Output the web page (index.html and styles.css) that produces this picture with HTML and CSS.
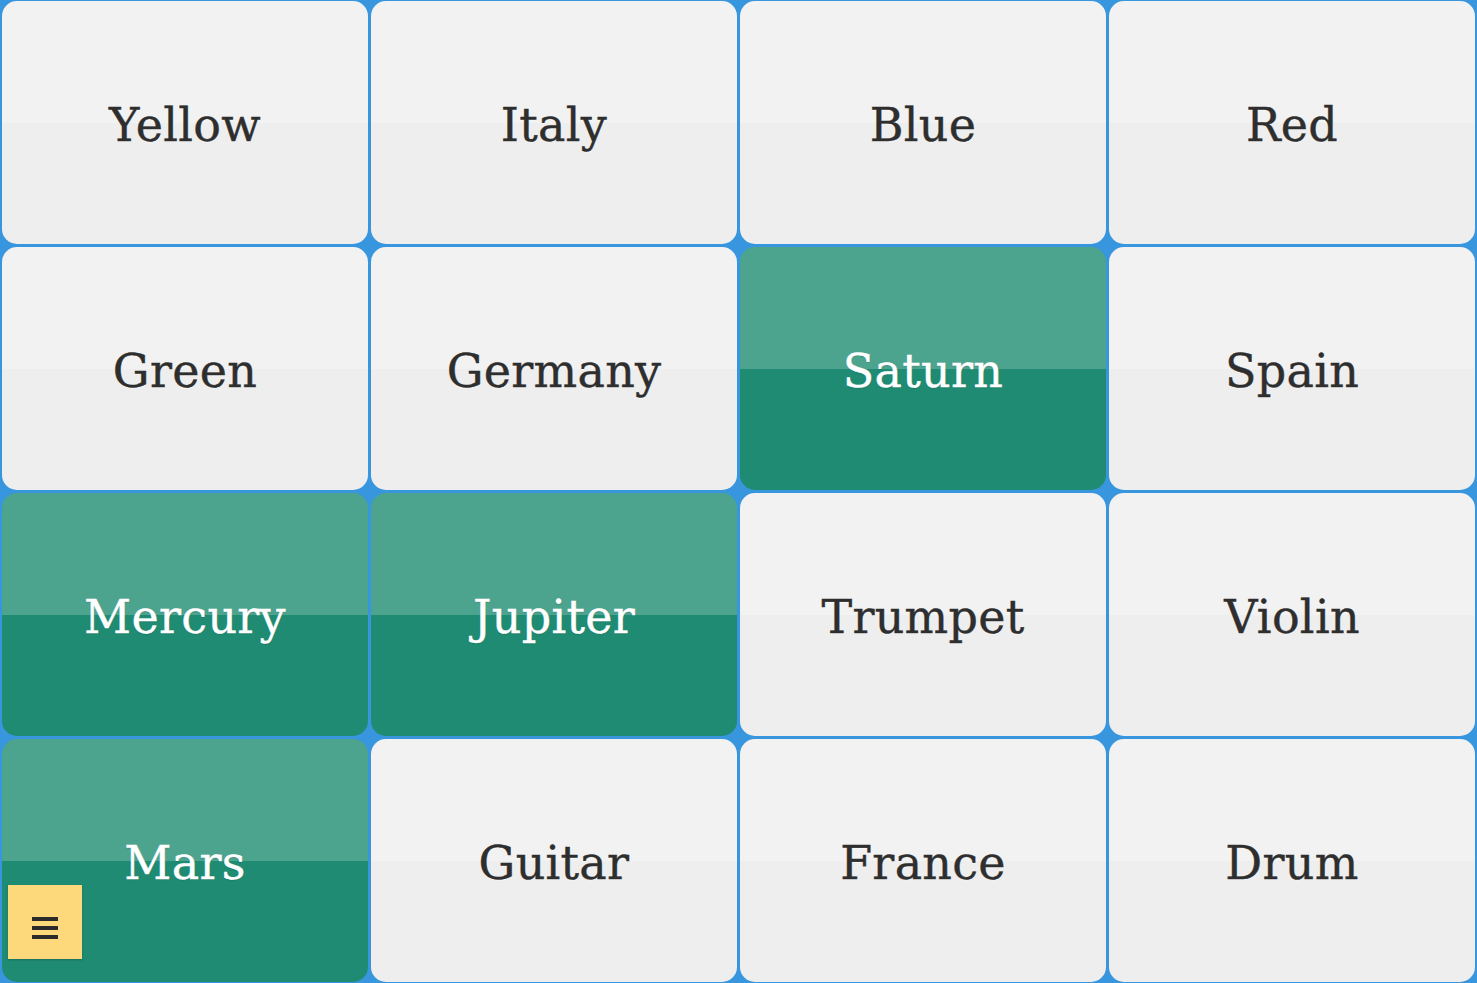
FILE: index.html
```html
<!DOCTYPE html>
<html lang="en">
<head>
  <meta charset="UTF-8">
  <meta name="viewport" content="width=device-width, initial-scale=1.0">
  <title>Word Board</title>
  <link rel="stylesheet" href="styles.css">
</head>
<body>
  <main class="board">
    <div class="tile">Yellow</div>
    <div class="tile">Italy</div>
    <div class="tile">Blue</div>
    <div class="tile">Red</div>

    <div class="tile">Green</div>
    <div class="tile">Germany</div>
    <div class="tile tile-found">Saturn</div>
    <div class="tile">Spain</div>

    <div class="tile tile-found">Mercury</div>
    <div class="tile tile-found">Jupiter</div>
    <div class="tile">Trumpet</div>
    <div class="tile">Violin</div>

    <div class="tile tile-found">Mars</div>
    <div class="tile">Guitar</div>
    <div class="tile">France</div>
    <div class="tile">Drum</div>
  </main>

  <button class="menu-button" aria-label="Menu">
    <span class="menu-bar"></span>
    <span class="menu-bar"></span>
    <span class="menu-bar"></span>
  </button>
</body>
</html>
```

FILE: styles.css
```css
html, body {
  height: 100%;
}

body {
  margin: 0;
  padding: 0;
  background-color: #3896de;
  font-family: "DejaVu Serif", "Liberation Serif", serif;
  overflow: hidden;
}

.board {
  box-sizing: border-box;
  height: 100vh;
  padding: 1px 2px;
  display: grid;
  grid-template-columns: repeat(4, 1fr);
  grid-template-rows: repeat(4, 1fr);
  gap: 3px;
}

.tile {
  display: flex;
  align-items: center;
  justify-content: center;
  padding-top: 4px;
  border-radius: 15px;
  background: linear-gradient(to bottom, #f2f2f2 50%, #eeeeee 50%);
  color: #2e2e2e;
  font-size: 46px;
  letter-spacing: 0.3px;
  -webkit-text-stroke: 0.4px currentColor;
  text-shadow: 0 1px 0 rgba(255, 255, 255, 0.6);
}

.tile-found {
  background: linear-gradient(to bottom, #4ca38e 50%, #1f8b72 50%);
  color: #fff;
  text-shadow: 0 1px 1px rgba(0, 0, 0, 0.15);
}

.menu-button {
  position: fixed;
  left: 8px;
  bottom: 24px;
  width: 74px;
  height: 74px;
  padding: 12px 0 0;
  border: none;
  background-color: #fed97b;
  box-shadow: 0 1px 2px rgba(0, 0, 0, 0.2);
  display: flex;
  flex-direction: column;
  align-items: center;
  justify-content: center;
  gap: 5px;
  cursor: pointer;
}

.menu-bar {
  display: block;
  width: 26px;
  height: 4px;
  background-color: #2b2b2b;
}
```
